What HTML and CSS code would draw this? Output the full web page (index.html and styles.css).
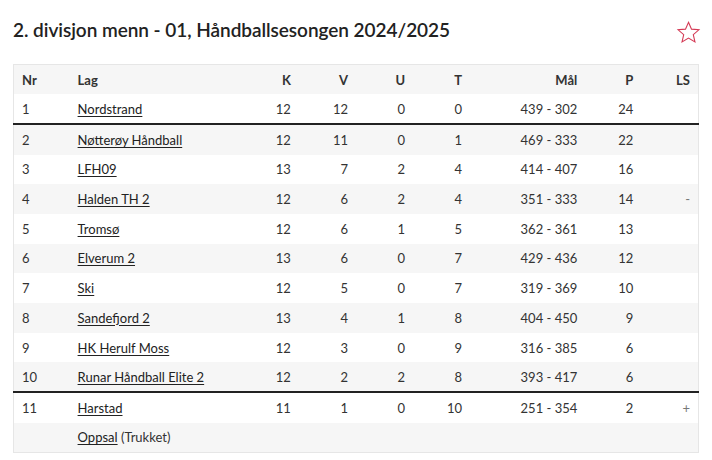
FILE: index.html
```html
<!DOCTYPE html>
<html lang="no">
<head>
<meta charset="utf-8">
<title>2. divisjon menn - 01</title>
<link rel="stylesheet" href="styles.css">
</head>
<body>
<div class="page">
  <div class="head">
    <h1 class="title">2. divisjon menn - 01, Håndballsesongen 2024/2025</h1>
    <svg class="star" viewBox="0 0 24 24" width="25" height="25" aria-hidden="true">
      <path d="M12 2.2l2.9 6.6 7.1.6-5.4 4.7 1.6 7-6.2-3.7-6.2 3.7 1.6-7L2 9.4l7.1-.6z" fill="none" stroke="#d43a55" stroke-width="1.05" stroke-linejoin="miter"/>
    </svg>
  </div>
  <table class="tbl">
    <colgroup>
      <col class="c-nr"><col class="c-lag"><col class="c-n"><col class="c-n"><col class="c-n"><col class="c-n"><col class="c-mal"><col class="c-p"><col class="c-n">
    </colgroup>
    <thead>
      <tr class="alt"><th class="l">Nr</th><th class="l">Lag</th><th>K</th><th>V</th><th>U</th><th>T</th><th>Mål</th><th>P</th><th>LS</th></tr>
    </thead>
    <tbody>
      <tr class="sep"><td class="l">1</td><td class="l"><a href="#">Nordstrand</a></td><td>12</td><td>12</td><td>0</td><td>0</td><td>439 - 302</td><td>24</td><td></td></tr>
      <tr class="alt"><td class="l">2</td><td class="l"><a href="#">Nøtterøy Håndball</a></td><td>12</td><td>11</td><td>0</td><td>1</td><td>469 - 333</td><td>22</td><td></td></tr>
      <tr><td class="l">3</td><td class="l"><a href="#">LFH09</a></td><td>13</td><td>7</td><td>2</td><td>4</td><td>414 - 407</td><td>16</td><td></td></tr>
      <tr class="alt"><td class="l">4</td><td class="l"><a href="#">Halden TH 2</a></td><td>12</td><td>6</td><td>2</td><td>4</td><td>351 - 333</td><td>14</td><td class="ls">-</td></tr>
      <tr><td class="l">5</td><td class="l"><a href="#">Tromsø</a></td><td>12</td><td>6</td><td>1</td><td>5</td><td>362 - 361</td><td>13</td><td></td></tr>
      <tr class="alt"><td class="l">6</td><td class="l"><a href="#">Elverum 2</a></td><td>13</td><td>6</td><td>0</td><td>7</td><td>429 - 436</td><td>12</td><td></td></tr>
      <tr><td class="l">7</td><td class="l"><a href="#">Ski</a></td><td>12</td><td>5</td><td>0</td><td>7</td><td>319 - 369</td><td>10</td><td></td></tr>
      <tr class="alt"><td class="l">8</td><td class="l"><a href="#">Sandefjord 2</a></td><td>13</td><td>4</td><td>1</td><td>8</td><td>404 - 450</td><td>9</td><td></td></tr>
      <tr><td class="l">9</td><td class="l"><a href="#">HK Herulf Moss</a></td><td>12</td><td>3</td><td>0</td><td>9</td><td>316 - 385</td><td>6</td><td></td></tr>
      <tr class="alt sep"><td class="l">10</td><td class="l"><a href="#">Runar Håndball Elite 2</a></td><td>12</td><td>2</td><td>2</td><td>8</td><td>393 - 417</td><td>6</td><td></td></tr>
      <tr><td class="l">11</td><td class="l"><a href="#">Harstad</a></td><td>11</td><td>1</td><td>0</td><td>10</td><td>251 - 354</td><td>2</td><td class="ls">+</td></tr>
      <tr class="alt"><td class="l"></td><td class="l"><a href="#">Oppsal</a> (Trukket)</td><td></td><td></td><td></td><td></td><td></td><td></td><td></td></tr>
    </tbody>
  </table>
</div>
</body>
</html>
```
FILE: styles.css
```css
html, body {
  margin: 0;
  padding: 0;
  background: #fff;
}
body {
  font-family: "Source Sans Pro", Lato, "Noto Sans", sans-serif;
  color: #333;
}
.page {
  padding: 0 13px;
}
.head {
  display: flex;
  align-items: center;
  justify-content: space-between;
  height: 64px;
}
.title {
  margin: 0;
  font-size: 19px;
  font-weight: 600;
  color: #222;
  letter-spacing: -0.05px;
  padding-bottom: 6px;
}
.star {
  margin-right: -2px;
  margin-bottom: 0;
}
.tbl {
  width: 686px;
  border-collapse: collapse;
  table-layout: fixed;
  border: 1px solid #e6e6e6;
  font-size: 13px;
}
.c-nr { width: 56px; }
.c-lag { width: 172px; }
.c-n { width: 57px; }
.c-mal { width: 115px; }
.c-p { width: 56px; }
.tbl th, .tbl td {
  height: 29.7px;
  padding: 0 8px;
  text-align: right;
  white-space: nowrap;
  box-sizing: border-box;
}
.tbl th {
  font-weight: 700;
  color: #333;
}
.tbl .l {
  text-align: left;
}
.tbl .ls {
  color: #777;
}
.tbl tr.alt {
  background: #f6f6f6;
}
.tbl tr.sep td {
  border-bottom: 2px solid #222;
}
.tbl tr.sep + tr td {
  height: 30.7px;
  padding-top: 1px;
}
.tbl a {
  color: #222;
  text-decoration: underline;
  text-underline-offset: 2px;
}
```
